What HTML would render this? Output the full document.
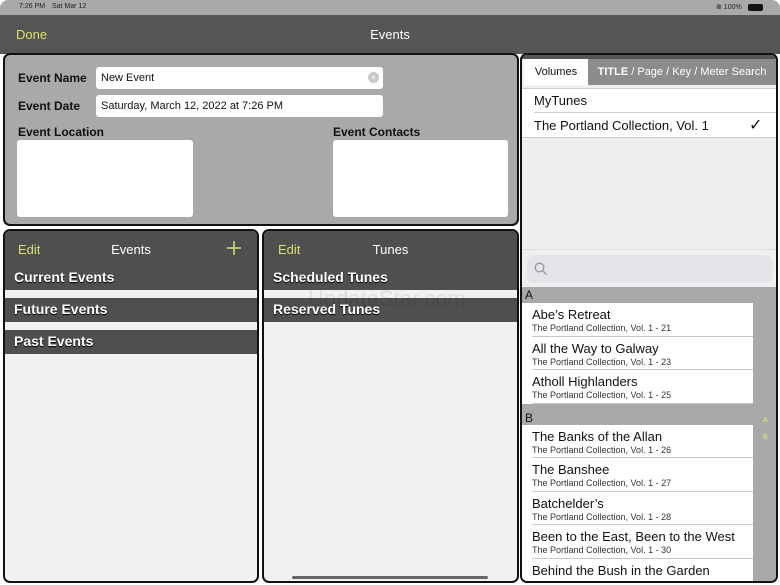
<!DOCTYPE html>
<html><head><meta charset="utf-8"><style>
*{box-sizing:border-box;margin:0;padding:0}
body{width:780px;height:585px;overflow:hidden;background:#fff;font-family:"Liberation Sans",sans-serif;position:relative}
.abs{position:absolute}
.status{left:0;top:0;width:780px;height:15px;background:#a9a9a9;font-size:7px;color:#222;border-radius:8px 8px 0 0}
.nav{left:0;top:15px;width:780px;height:39px;background:#555}
.panel{border:2px solid #111;border-radius:7px;overflow:hidden}
.lbl{font-weight:bold;font-size:12px;color:#111}
.field{background:#fff;border-radius:3px;font-size:11px;color:#111;padding:0 5px;line-height:22px}
.hdr{background:#4f4f4f;height:35px;position:relative;color:#fff;font-size:13px}
.row{background:#4f4f4f;height:24px;color:#fff;font-weight:bold;font-size:14px;line-height:22px;padding-left:9px;text-shadow:0 1px 1px #000}
.gap{height:8px;background:#f1f1f4}
.item{background:#fff;height:33.5px;width:231px;padding-left:10px;position:relative}
.item:after{content:"";position:absolute;left:10px;right:0;bottom:0;border-bottom:1px solid #c8c8c8}
.item .t{font-size:13px;color:#111;line-height:16px;padding-top:4px}
.item .s{font-size:9px;color:#333;line-height:11px}
.sec{height:16px;background:#a9a9a9;font-size:12px;line-height:16px;padding-left:3px;color:#111}
</style></head><body>
<div class="abs status"><span class="abs" style="left:19px;top:3px">7:26 PM</span><span class="abs" style="left:52px;top:3px">Sat Mar 12</span><span class="abs" style="left:716px;top:3px">⋒ 100%</span><span class="abs" style="left:748px;top:4px;width:15px;height:7px;background:#111;border-radius:2px"></span></div>
<div class="abs nav"><span class="abs" style="left:16px;top:12px;color:#e0e06a;font-size:13px">Done</span><span class="abs" style="left:0;width:780px;text-align:center;top:12px;color:#fff;font-size:13px">Events</span></div>

<div class="abs panel" style="left:3px;top:53px;width:516px;height:173px;background:#a9a9a9">
 <div class="abs lbl" style="left:13px;top:16px">Event Name</div>
 <div class="abs field" style="left:91px;top:12px;width:287px;height:22px">New Event<span class="abs" style="right:4px;top:5px;width:11px;height:11px;border-radius:50%;background:#c8c8c8;color:#fff;font-size:8px;line-height:11px;text-align:center">×</span></div>
 <div class="abs lbl" style="left:13px;top:44px">Event Date</div>
 <div class="abs field" style="left:91px;top:40px;width:287px;height:22px">Saturday, March 12, 2022 at 7:26 PM</div>
 <div class="abs lbl" style="left:13px;top:70px">Event Location</div>
 <div class="abs" style="left:12px;top:85px;width:176px;height:77px;background:#fff;border-radius:3px"></div>
 <div class="abs lbl" style="left:328px;top:70px">Event Contacts</div>
 <div class="abs" style="left:328px;top:85px;width:175px;height:77px;background:#fff;border-radius:3px"></div>
</div>

<div class="abs panel" style="left:3px;top:229px;width:256px;height:354px;background:#f1f1f4">
 <div class="hdr"><span class="abs" style="left:13px;top:11px;color:#d8e070">Edit</span><span class="abs" style="left:0;width:252px;text-align:center;top:11px">Events</span><svg class="abs" style="left:222px;top:10px" width="14" height="14"><path d="M7 0V14M0 7H14" stroke="#d8e070" stroke-width="1.5"/></svg></div>
 <div class="row">Current Events</div><div class="gap"></div>
 <div class="row">Future Events</div><div class="gap"></div>
 <div class="row">Past Events</div>
</div>

<div class="abs panel" style="left:262px;top:229px;width:257px;height:354px;background:#f1f1f4">
 <div class="hdr"><span class="abs" style="left:14px;top:11px;color:#d8e070">Edit</span><span class="abs" style="left:0;width:253px;text-align:center;top:11px">Tunes</span></div>
 <div class="row">Scheduled Tunes</div><div class="gap"></div>
 <div class="row">Reserved Tunes</div>
 <div class="abs" style="left:44px;top:55px;font-size:22px;color:rgba(0,0,0,0.08)">UpdateStar.com</div>
 <div class="abs" style="left:28px;top:345px;width:196px;height:3px;background:#666;border-radius:2px"></div>
</div>

<div class="abs panel" style="left:520px;top:53px;width:258px;height:530px;background:#efeff2">
 <div class="abs" style="left:0;top:0;width:254px;height:4px;background:#555"></div>
 <div class="abs" style="left:2px;top:4px;width:64px;height:26px;background:#fff;font-size:11px;line-height:26px;text-align:center;color:#111">Volumes</div>
 <div class="abs" style="left:66px;top:4px;width:188px;height:26px;background:#8c8c8c;font-size:11px;line-height:26px;text-align:center;color:#fff"><b>TITLE</b> / Page / Key / Meter Search</div>
 <div class="abs" style="left:0;top:33px;width:254px;height:50px;background:#fff;border-top:1px solid #ccc;border-bottom:1px solid #ccc"></div>
 <div class="abs" style="left:12px;top:38px;font-size:13px;color:#111">MyTunes</div>
 <div class="abs" style="left:12px;top:57px;width:242px;border-top:1px solid #ccc"></div>
 <div class="abs" style="left:12px;top:63px;font-size:13px;color:#111">The Portland Collection, Vol. 1</div>
 <div class="abs" style="left:227px;top:60px;font-size:16px;color:#111">✓</div>
 <div class="abs" style="left:0;top:194px;width:254px;border-top:1px solid #ddd"></div>
 <div class="abs" style="left:5px;top:200px;width:246px;height:28px;background:#e4e4e8;border-radius:8px"><svg class="abs" style="left:7px;top:7px" width="14" height="14" viewBox="0 0 14 14"><circle cx="5.5" cy="5.5" r="4.3" fill="none" stroke="#999" stroke-width="1.3"/><path d="M8.7 8.7L12.5 12.5" stroke="#999" stroke-width="1.4"/></svg></div>
 <div class="abs" style="left:0;top:232px;width:254px;height:300px;background:#a9a9a9">
  <div class="abs" style="left:241px;top:130px;font-size:7px;color:#e8e870">A</div>
  <div class="abs" style="left:241px;top:147px;font-size:7px;color:#e8e870">B</div>
  <div class="abs" style="left:0;top:0">
   <div class="sec">A</div>
   <div class="item"><div class="t">Abe’s Retreat</div><div class="s">The Portland Collection, Vol. 1 - 21</div></div>
   <div class="item"><div class="t">All the Way to Galway</div><div class="s">The Portland Collection, Vol. 1 - 23</div></div>
   <div class="item"><div class="t">Atholl Highlanders</div><div class="s">The Portland Collection, Vol. 1 - 25</div></div>
   <div class="sec" style="height:21px;line-height:28px">B</div>
   <div class="item"><div class="t">The Banks of the Allan</div><div class="s">The Portland Collection, Vol. 1 - 26</div></div>
   <div class="item"><div class="t">The Banshee</div><div class="s">The Portland Collection, Vol. 1 - 27</div></div>
   <div class="item"><div class="t">Batchelder’s</div><div class="s">The Portland Collection, Vol. 1 - 28</div></div>
   <div class="item"><div class="t">Been to the East, Been to the West</div><div class="s">The Portland Collection, Vol. 1 - 30</div></div>
   <div class="item"><div class="t">Behind the Bush in the Garden</div></div>
  </div>
 </div>
</div>
</body></html>
